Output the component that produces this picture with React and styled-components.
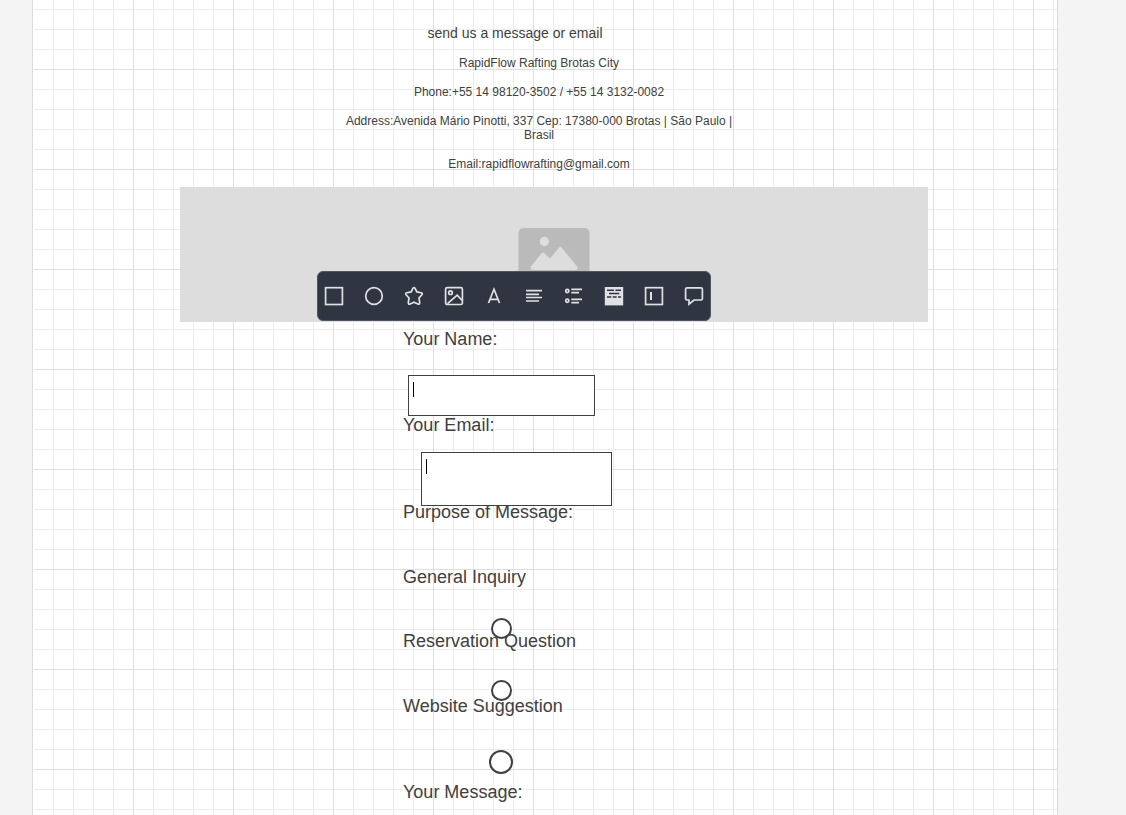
import React from "react";
import styled, { createGlobalStyle } from "styled-components";

const GlobalStyle = createGlobalStyle`
  *, *::before, *::after { box-sizing: border-box; }
  body {
    margin: 0;
    background: #f4f4f4;
    color: #404040;
    font-family: "Liberation Sans", Arial, sans-serif;
  }
`;

const Viewport = styled.div`
  height: 100vh;
  overflow: hidden;
  padding: 0 68px 0 32px;
`;

const Sheet = styled.main`
  min-height: 100%;
  padding-top: 24px;
  border: solid #dcdcdc;
  border-width: 0 1px;
  box-shadow: inset 1px 0 #fff;
  background-color: #fff;
  background-image:
    linear-gradient(to right, #dedede 1px, transparent 1px),
    linear-gradient(to bottom, #dedede 1px, transparent 1px),
    linear-gradient(to right, #ececec 1px, transparent 1px),
    linear-gradient(to bottom, #ececec 1px, transparent 1px);
  background-size: 100px 100px, 100px 100px, 20px 20px, 20px 20px;
  background-position: 0 0, 0 69px, 0 0, 0 9px;
`;

const Intro = styled.p`
  width: 364px;
  margin: 0 0 0 300px;
  font-size: 14px;
  line-height: 18px;
  text-align: center;
`;

const Contact = styled.address`
  display: flex;
  flex-direction: column;
  gap: 15px;
  width: 420px;
  margin: 14px 0 0 296px;
  font-size: 12px;
  line-height: 14px;
  font-style: normal;
  text-align: center;
`;

const Line = styled.p`
  margin: 0;
`;

const Banner = styled.section`
  position: relative;
  display: flex;
  align-items: center;
  justify-content: center;
  height: 135px;
  margin: 16px 129px 0 147px;
  background: #ddd;
`;

const Toolbar = styled.div`
  position: absolute;
  left: 137px;
  bottom: 1px;
  display: flex;
  align-items: center;
  gap: 8px;
  height: 50px;
  border: 1px solid #4d5462;
  border-radius: 6px;
  background: #2f3541;
`;

const Tool = styled.button`
  display: flex;
  align-items: center;
  justify-content: center;
  width: 32px;
  height: 32px;
  padding: 0;
  border: 0;
  background: none;
  color: #dfe1e5;
  cursor: pointer;
`;

const Form = styled.form`
  display: flex;
  flex-direction: column;
  align-items: flex-start;
  margin: 6px 0 0 370px;
  font-size: 18px;
  line-height: 22px;
`;

const Field = styled.div`
  height: ${(p) => p.$height}px;
`;

const Group = styled.fieldset`
  margin: 0;
  padding: 0;
  border: 0;
`;

const Caption = styled.legend`
  height: 65px;
  padding: 0;
`;

const Label = styled.label`
  display: block;
`;

const Prompt = styled.p`
  margin: 0;
`;

const Entry = styled.div`
  position: relative;
  z-index: 1;
  width: ${(p) => p.$width}px;
  height: ${(p) => p.$height}px;
  margin: ${(p) => p.$top}px 0 0 ${(p) => p.$left}px;

  &::after {
    content: "";
    position: absolute;
    top: 7px;
    left: 5px;
    width: 1px;
    height: 15px;
    background: #000;
  }
`;

const TextBox = styled.input`
  display: block;
  width: 100%;
  height: 100%;
  padding: 0 8px;
  border: 1px solid #404040;
  border-radius: 0;
  background: #fff;
  font: inherit;
`;

const Radio = styled.input`
  position: relative;
  z-index: 1;
  display: block;
  appearance: none;
  width: ${(p) => p.$size}px;
  height: ${(p) => p.$size}px;
  margin: ${(p) => p.$top}px 0 0 ${(p) => p.$left}px;
  border: 2px solid #404040;
  border-radius: 50%;
  background: #fff;
`;

const tools = [
  { name: "Rectangle", art: <rect x="3.6" y="3.7" width="16.8" height="16.8" /> },
  { name: "Ellipse", art: <circle cx="12" cy="12" r="8.3" /> },
  {
    name: "Star",
    art: (
      <path d="M10.9 4.4Q12 2.6 13.1 4.4L14.9 7.9L19.2 8.7Q21 9.3 19.9 10.8L17 14L17.7 18.6Q17.7 20.7 15.9 20L12 18.2L8.1 20Q6.3 20.7 6.3 18.6L7 14L4.1 10.8Q3 9.3 4.8 8.7L9.1 7.9Z" />
    ),
  },
  {
    name: "Image",
    art: (
      <>
        <rect x="3.6" y="3.7" width="16.8" height="16.8" rx="1.6" />
        <circle cx="8.5" cy="8.7" r="1.8" />
        <path d="M5.5 19.7L15.2 11.2L20.2 16.5" />
      </>
    ),
  },
  { name: "Text", art: <path d="M6.5 19L12 5.2L17.5 19M8.4 15.3H15.6" /> },
  { name: "Paragraph", art: <path d="M4 6.7H20M4 10.3H17M4 13.5H20M4 17H17" /> },
  {
    name: "List",
    art: (
      <>
        <circle cx="5.3" cy="7" r="1.6" />
        <circle cx="5.3" cy="16.8" r="1.6" />
        <path d="M9.3 5.4H20M9.3 8.7H17M9.3 15.3H20M9.3 18.7H17" />
      </>
    ),
  },
  {
    name: "Text block",
    art: (
      <>
        <rect x="2.8" y="3" width="18.4" height="18.4" fill="currentColor" stroke="none" />
        <path
          stroke="#2f3541"
          strokeWidth="1.5"
          d="M5 6.2H12M13.4 6.2H19M7 9.5H17.3M5 13H9.3M10.7 13H14.7M16 13H19"
        />
      </>
    ),
  },
  {
    name: "Input",
    art: (
      <>
        <rect x="3.6" y="3.7" width="16.8" height="16.8" />
        <path d="M9 8V16" strokeWidth="2" />
      </>
    ),
  },
  {
    name: "Comment",
    art: (
      <path d="M5 3.8H19Q20.4 3.8 20.4 5.2V14.6Q20.4 16 19 16H12L7 20.2V16H5Q3.6 16 3.6 14.6V5.2Q3.6 3.8 5 3.8Z" />
    ),
  },
];

const options = [
  { id: "general", text: "General Inquiry", size: 21, top: 30, left: 88, height: 64 },
  { id: "reservation", text: "Reservation Question", size: 21, top: 28, left: 88, height: 65 },
  { id: "website", text: "Website Suggestion", size: 24, top: 33, left: 86, height: 86 },
];

export default function App() {
  return (
    <>
      <GlobalStyle />
      <Viewport>
        <Sheet>
          <Intro>send us a message or email</Intro>
          <Contact>
            <Line>RapidFlow Rafting Brotas City</Line>
            <Line>Phone:+55 14 98120-3502 / +55 14 3132-0082</Line>
            <Line>
              Address:Avenida Mário Pinotti, 337 Cep: 17380-000 Brotas | São Paulo |
              <br />
              Brasil
            </Line>
            <Line>Email:rapidflowrafting@gmail.com</Line>
          </Contact>
          <Banner>
            <svg width="72" height="54" viewBox="0 0 72 54" aria-hidden="true">
              <rect x="0.5" width="71" height="54" rx="5" fill="#bababa" />
              <circle cx="26.3" cy="13.4" r="4.6" fill="#ddd" />
              <path
                d="M12.8 38.5L23.8 25Q25 23.8 26.2 25L32 30.5L41.2 19.5Q42.3 18.2 43.5 19.5L59.2 38.5Q60.5 42 57.5 42H14.5Q11.5 42 12.8 38.5Z"
                fill="#ddd"
              />
            </svg>
            <Toolbar role="toolbar" aria-label="Shapes">
              {tools.map((tool) => (
                <Tool key={tool.name} type="button" aria-label={tool.name}>
                  <svg
                    width="24"
                    height="24"
                    viewBox="0 0 24 24"
                    fill="none"
                    stroke="currentColor"
                    strokeWidth="1.7"
                  >
                    {tool.art}
                  </svg>
                </Tool>
              ))}
            </Toolbar>
          </Banner>
          <Form>
            <Field $height={86}>
              <Label htmlFor="name">Your Name:</Label>
              <Entry $width={187} $height={41} $top={25} $left={5}>
                <TextBox id="name" type="text" />
              </Entry>
            </Field>
            <Field $height={87}>
              <Label htmlFor="email">Your Email:</Label>
              <Entry $width={191} $height={54} $top={16} $left={18}>
                <TextBox id="email" type="email" />
              </Entry>
            </Field>
            <Group>
              <Caption>Purpose of Message:</Caption>
              {options.map((o) => (
                <Field key={o.id} $height={o.height}>
                  <Label htmlFor={o.id}>{o.text}</Label>
                  <Radio
                    id={o.id}
                    type="radio"
                    name="purpose"
                    $size={o.size}
                    $top={o.top}
                    $left={o.left}
                  />
                </Field>
              ))}
            </Group>
            <Prompt>Your Message:</Prompt>
          </Form>
        </Sheet>
      </Viewport>
    </>
  );
}
